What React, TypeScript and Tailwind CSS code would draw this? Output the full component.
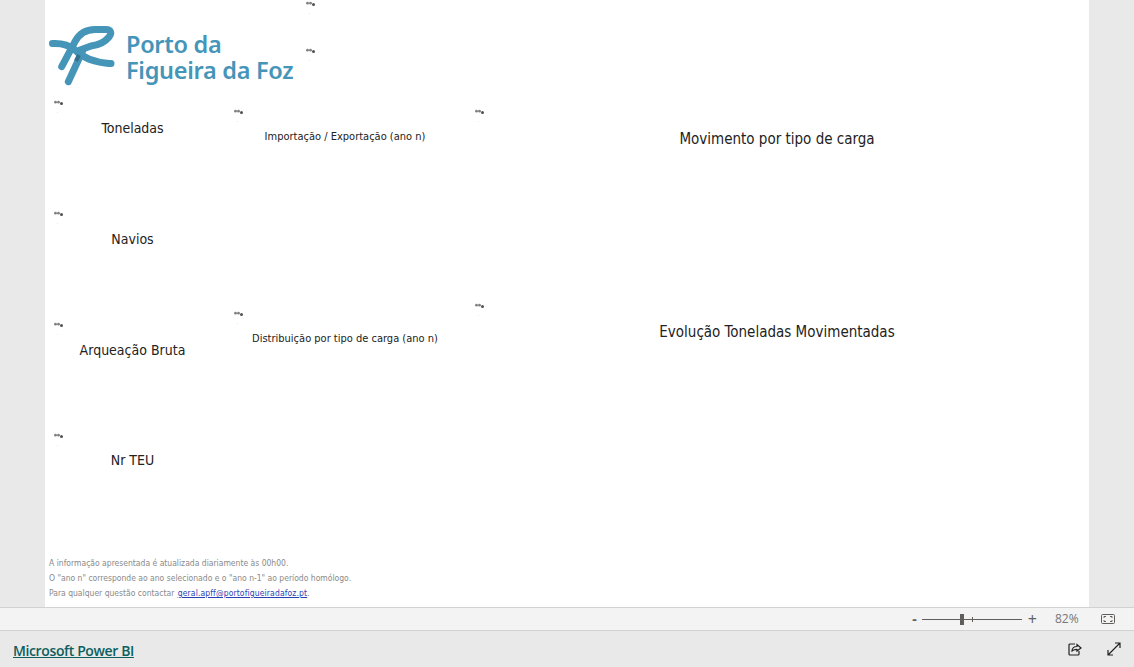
import React from "react";

function Loader({ className }: { className: string }) {
  return (
    <span className={`absolute block w-[9px] h-[13px] ${className}`}>
      <svg width="9" height="13" viewBox="0 0 9 13">
        <circle cx="1.5" cy="2.2" r="1.4" fill="#808080" />
        <circle cx="4.5" cy="2.2" r="1.4" fill="#808080" />
        <circle cx="7.5" cy="3.4" r="1.5" fill="#505050" />
        <rect x="3" y="12" width="1" height="1" fill="#e8e8e8" />
      </svg>
    </span>
  );
}

function Logo() {
  return (
    <div className="flex items-center">
      <svg width="76" height="60" viewBox="0 0 76 60" className="shrink-0">
        <g fill="none" stroke="#4595b9" strokeWidth="7" strokeLinecap="round" strokeLinejoin="round">
          <path d="M3.5 17.5 C12 17 20 19 26 24 C33 31 42 36 60 37.5 L62 37.5" />
          <path d="M12.7 40.7 L26 15.7 C30 8 37 3.5 46 3.5 L57 3.5 C62 3.5 63 7 60 11 C56 16 50 19 42 20 L31 24" />
          <path d="M19.3 55.7 L34 24" />
        </g>
        <path d="M27 35 L30 29" stroke="#35708d" strokeWidth="4" fill="none" />
      </svg>
      <div className="ml-[1px] pt-[1px] text-[23.5px] leading-[26px] font-semibold text-[#4595b9] font-['Noto_Sans',sans-serif] whitespace-nowrap">
        <div className="tracking-[-0.3px]">Porto da</div>
        <div className="tracking-[-0.3px]">Figueira da Foz</div>
      </div>
    </div>
  );
}

function Kpi({ label, mt }: { label: string; mt: string }) {
  return (
    <div className={`text-[14px] leading-[20px] text-[#222] text-center ${mt}`}>{label}</div>
  );
}

export default function App() {
  return (
    <div className="h-screen flex flex-col overflow-hidden bg-[#e9e9e9] font-['DejaVu_Sans_Condensed','DejaVu_Sans',sans-serif]">
      <main className="h-[607px] flex pl-[45px] pr-[45px]">
        <div className="relative w-[1044px] bg-white flex flex-col">
          <Loader className="left-[261px] top-[1px]" />
          <Loader className="left-[261px] top-[48px]" />
          <Loader className="left-[9px] top-[100px]" />
          <Loader className="left-[9px] top-[211px]" />
          <Loader className="left-[9px] top-[322px]" />
          <Loader className="left-[9px] top-[433px]" />
          <Loader className="left-[189px] top-[109px]" />
          <Loader className="left-[189px] top-[311px]" />
          <Loader className="left-[430px] top-[109px]" />
          <Loader className="left-[430px] top-[303px]" />

          <div className="pl-[4px] pt-[26px] h-[118px]">
            <Logo />
          </div>

          <div className="flex-1 flex">
            <div className="w-[175px] flex flex-col">
              <Kpi label="Toneladas" mt="mt-0" />
              <Kpi label="Navios" mt="mt-[91px]" />
              <Kpi label="Arqueação Bruta" mt="mt-[91px]" />
              <Kpi label="Nr TEU" mt="mt-[90px]" />
            </div>
            <div className="w-[250px] flex flex-col text-center text-[11px] leading-[16px] text-[#222]">
              <div className="mt-[11px]">Importação / Exportação (ano n)</div>
              <div className="mt-[186px]">Distribuição por tipo de carga (ano n)</div>
            </div>
            <div className="w-[614px] flex flex-col text-center text-[15px] leading-[22px] text-[#222]">
              <div className="mt-[10px]">Movimento por tipo de carga</div>
              <div className="mt-[171px]">Evolução Toneladas Movimentadas</div>
            </div>
          </div>

          <div className="pl-[4px] pb-[6px] text-[8.5px] leading-[15px] text-[#8a8a8a]">
            <div>A informação apresentada é atualizada diariamente às 00h00.</div>
            <div>O "ano n" corresponde ao ano selecionado e o "ano n-1" ao período homólogo.</div>
            <div>
              Para qualquer questão contactar{" "}
              <a href="#" className="ml-[1px] text-[#2a3fb5] underline tracking-[0.13px]">geral.apff@portofigueiradafoz.pt</a>.
            </div>
          </div>
        </div>
      </main>

      <div className="h-[24px] bg-[#f3f3f3] border-t border-b border-[#d2d2d2] flex items-center justify-end text-[#605e5c]">
        <span className="text-[14px] font-bold leading-none mr-[5px] font-['Open_Sans',sans-serif]">-</span>
        <div className="relative w-[100px] h-[1px] bg-[#605e5c]">
          <span className="absolute left-[38px] top-[-5px] w-[4px] h-[11px] bg-[#605e5c]" />
          <span className="absolute left-[50px] top-[-2px] w-[1px] h-[5px] bg-[#605e5c]" />
        </div>
        <span className="text-[16px] leading-none ml-[6px] font-['Open_Sans',sans-serif]">+</span>
        <span className="text-[12px] ml-[18px] w-[24px] font-['Open_Sans',sans-serif] text-[#777]">82%</span>
        <svg width="14" height="10" viewBox="0 0 14 10" className="ml-[22px] mr-[19px]" fill="none" stroke="#605e5c">
          <rect x="0.5" y="0.5" width="13" height="9" rx="1" />
          <path d="M3 4V2.5H5M9 2.5H11V4M11 6V7.5H9M5 7.5H3V6" />
        </svg>
      </div>

      <footer className="flex-1 flex items-center justify-between pl-[13px] pr-[13px]">
        <a href="#" className="pt-[2px] text-[14px] font-semibold text-[#0b5f5f] underline font-['Open_Sans',sans-serif] tracking-[-0.38px]">Microsoft Power BI</a>
        <div className="flex items-center gap-[25px]">
          <svg width="14" height="14" viewBox="0 0 14 14" fill="none" stroke="#222" strokeWidth="1.2">
            <path d="M7 2H2a1 1 0 0 0-1 1v9a1 1 0 0 0 1 1h8a1 1 0 0 0 1-1V9" />
            <path d="M4 9c0-3 2-4.5 5-4.5V2.5L13 6 9 9V7.5C7 7.3 5.5 8 4 9z" />
          </svg>
          <svg width="14" height="14" viewBox="0 0 14 14" fill="none" stroke="#222" strokeWidth="1.2">
            <path d="M1 13L13 1M8 1h5v5M1 8v5h5" />
          </svg>
        </div>
      </footer>
    </div>
  );
}
